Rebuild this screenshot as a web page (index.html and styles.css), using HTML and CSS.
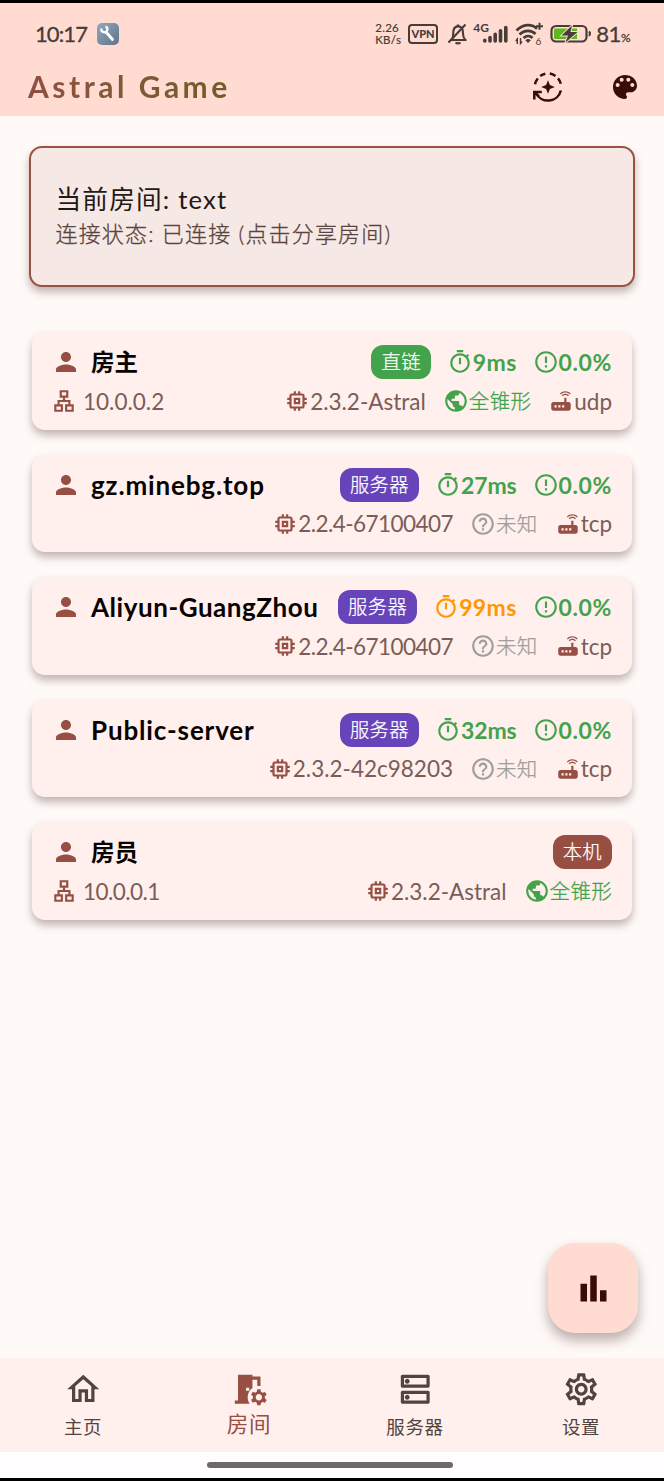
FILE: index.html
```html
<!DOCTYPE html>
<html lang="zh-CN">
<head>
<meta charset="utf-8">
<title>Astral Game</title>
<link rel="stylesheet" href="styles.css">
</head>
<body>
<svg class="defs" aria-hidden="true">
  <symbol id="person" viewBox="0 0 24 24"><path d="M12 12c2.21 0 4-1.79 4-4s-1.79-4-4-4-4 1.79-4 4 1.79 4 4 4zm0 2c-2.67 0-8 1.34-8 4v2h16v-2c0-2.66-5.33-4-8-4z"/></symbol>
  <symbol id="lan" viewBox="0 0 24 24"><path fill-rule="evenodd" d="M13 22h8v-7h-3v-4h-5V9h3V2H8v7h3v2H6v4H3v7h8v-7H8v-2h8v2h-3v7zM10 7V4h4v3h-4zM9 17v3H5v-3h4zM19 17v3h-4v-3h4z"/></symbol>
  <symbol id="chip" viewBox="0 0 24 24"><path d="M15 9H9v6h6V9zm-2 4h-2v-2h2v2zm8-2V9h-2V7c0-1.1-.9-2-2-2h-2V3h-2v2h-2V3H9v2H7c-1.1 0-2 .9-2 2v2H3v2h2v2H3v2h2v2c0 1.100.9 2 2 2h2v2h2v-2h2v2h2v-2h2c1.100 0 2-.9 2-2v-2h2v-2h-2v-2h2zm-4 6H7V7h10v10z"/></symbol>
  <symbol id="timer" viewBox="0 0 24 24"><path d="M15 1H9v2h6V1zm-4 13h2V8h-2v6zm8.030-6.610l1.420-1.420c-.43-.51-.9-.99-1.410-1.410l-1.420 1.420C16.070 4.740 14.120 4 12 4c-4.970 0-9 4.030-9 9s4.020 9 9 9 9-4.030 9-9c0-2.120-.74-4.070-1.970-5.610zM12 20c-3.870 0-7-3.130-7-7s3.130-7 7-7 7 3.130 7 7-3.130 7-7 7z"/></symbol>
  <symbol id="loss" viewBox="0 0 24 24"><path d="M11 15h2v2h-2zm0-8h2v6h-2zm.99-5C6.470 2 2 6.480 2 12s4.470 10 9.990 10C17.520 22 22 17.520 22 12S17.520 2 11.990 2zM12 20c-4.420 0-8-3.580-8-8s3.580-8 8-8 8 3.580 8 8-3.580 8-8 8z"/></symbol>
  <symbol id="globe" viewBox="0 0 24 24"><path d="M12 2C6.480 2 2 6.480 2 12s4.480 10 10 10 10-4.480 10-10S17.520 2 12 2zm-1 17.930c-3.950-.49-7-3.850-7-7.930 0-.62.08-1.210.21-1.790L9 15v1c0 1.100.9 2 2 2v1.930zm6.900-2.540c-.26-.81-1-1.390-1.900-1.390h-1v-3c0-.55-.45-1-1-1H8v-2h2c.55 0 1-.45 1-1V7h2c1.100 0 2-.9 2-2v-.41c2.930 1.190 5 4.060 5 7.410 0 2.080-.8 3.970-2.100 5.390z"/></symbol>
  <symbol id="unknown" viewBox="0 0 24 24"><path d="M11 18h2v-2h-2v2zm1-16C6.480 2 2 6.480 2 12s4.480 10 10 10 10-4.480 10-10S17.520 2 12 2zm0 18c-4.410 0-8-3.590-8-8s3.590-8 8-8 8 3.590 8 8-3.590 8-8 8zm0-14c-2.210 0-4 1.790-4 4h2c0-1.100.9-2 2-2s2 .9 2 2c0 2-3 1.750-3 5h2c0-2.250 3-2.500 3-5 0-2.210-1.790-4-4-4z"/></symbol>
  <symbol id="router" viewBox="0 0 24 24"><path d="M20.200 5.900l.8-.8C19.600 3.700 17.800 3 16 3s-3.600.7-5 2.100l.8.8C13 4.800 14.500 4.200 16 4.200s3 .6 4.200 1.700zm-.9.8c-.9-.9-2.100-1.400-3.300-1.400s-2.400.5-3.300 1.400l.8.8c.7-.7 1.600-1 2.500-1s1.800.3 2.500 1l.8-.8zM19 13h-2V9h-2v4H5c-1.100 0-2 .9-2 2v4c0 1.100.9 2 2 2h14c1.100 0 2-.9 2-2v-4c0-1.100-.9-2-2-2zM8 18H6v-2h2v2zm3.500 0h-2v-2h2v2zm3.500 0h-2v-2h2v2z"/></symbol>
</svg>

<div class="screen">
  <header class="appbar">
    <div class="status">
      <span class="clock">10:17</span>
      <svg class="wrench" viewBox="0 0 22 22"><defs><linearGradient id="wg" x1="0" y1="0" x2="1" y2="1"><stop offset="0" stop-color="#91a8bd"/><stop offset="1" stop-color="#617488"/></linearGradient></defs><rect width="22" height="22" rx="5" fill="url(#wg)"/><path d="M9 9l6.500 7.500" stroke="#fff" stroke-width="2.800" stroke-linecap="round"/><path d="M4.500 5.500a3 3 0 1 0 4-2" fill="none" stroke="#fff" stroke-width="2.200"/></svg>
      <span class="net"><span>2.26</span><span>KB/s</span></span>
      <span class="vpn">VPN</span>
      <svg class="bell" viewBox="0 0 22 22" fill="none" stroke="#473c37" stroke-width="2.100"><path d="M3 17h16.500M5 16.500c1.200-1.600 1.200-3.200 1.200-6C6.200 6 8 3.400 11 3.400s5 2.600 5 7c0 3 .6 4.500 2 6"/><path d="M8.500 19.600a3.500 2 0 0 0 5 0" /><path d="M9.800 2.500h2.500M1.500 19.500L18.500 1.500"/></svg>
      <span class="cell"><span class="fourg">4G</span><svg viewBox="0 0 36 22" stroke="#473c37" stroke-width="3.600" stroke-linecap="round"><path d="M11.800 17.200v.8M17 14.500v3.500M22.200 11.200v6.800M27.500 7.700v10.300M32.800 4.500v13.500"/></svg></span>
      <svg class="wifi" viewBox="0 0 29 24" fill="none" stroke="#473c37" stroke-width="2.700"><path d="M1.500 8.500C8 1.600 17 1.600 22 6.800M4.500 12.500C9.500 7.800 16.500 7.800 20.500 12M8.500 16c3-2.700 6.500-2.700 9 0"/><path d="M10.300 18.200a4.200 4.200 0 0 1 5.600 0L13 21z" fill="#473c37" stroke="none"/><path d="M21 4.200h7M24.500.8v7" stroke-width="2"/><path d="M2.300 22v-5l-1.500 2M5.500 16v5.500l1.500-2" stroke-width="1.400"/><text x="20.500" y="22.800" class="six">6</text></svg>
      <svg class="battery" viewBox="0 0 42 22"><rect x="1.500" y="3" width="35" height="15.500" rx="4.500" fill="none" stroke="#473c37" stroke-width="2.200"/><path d="M5 5.500h22v10.500H5q-1 0-1-1V6.500q0-1 1-1z" fill="#5eb71c"/><path d="M39 8.500q2 2 0 4.500" stroke="#473c37" stroke-width="2" fill="none"/><path d="M22 2.500L11.500 12.500H18L15.500 19.500 27.500 9H20.500z" fill="#473c37" stroke="#ffdbd2" stroke-width="1.800" paint-order="stroke"/></svg>
      <span class="pct">81<small>%</small></span>
    </div>
    <div class="titlebar">
      <h1>Astral Game</h1>
      <svg class="sync" viewBox="0 0 32 32" fill="none" stroke="#390c05" stroke-width="2.500"><path d="M3 13.200A13.300 13.300 0 0 1 5.800 7.500M8.200 5A13.300 13.300 0 0 1 13.300 2.700M17.800 2.600A13.300 13.300 0 0 1 23.500 5M26 7.400A13.300 13.300 0 0 1 28.800 12.800M28.900 19.500A13.300 13.300 0 0 1 4 22"/><path d="M2.300 28.500v-7.500h7.500M3 21.700l4 4"/><path d="M16 9.200l1.900 4.900 4.900 1.900-4.900 1.900-1.900 4.900-1.900-4.900-4.900-1.900 4.900-1.900z" fill="#390c05" stroke="none"/></svg>
      <svg class="palette" viewBox="0 0 24 24" fill="#390c05"><path d="M12 3c-4.970 0-9 4.030-9 9s4.030 9 9 9c.83 0 1.500-.67 1.500-1.500 0-.39-.15-.74-.39-1.010-.23-.26-.38-.61-.38-.99 0-.83.67-1.500 1.500-1.500H16c2.760 0 5-2.240 5-5 0-4.420-4.030-8-9-8zm-5.500 9c-.83 0-1.500-.67-1.500-1.500S5.670 9 6.500 9 8 9.670 8 10.500 7.330 12 6.500 12zm3-4C8.670 8 8 7.330 8 6.500S8.670 5 9.500 5s1.500.67 1.500 1.500S10.330 8 9.500 8zm5 0c-.83 0-1.500-.67-1.500-1.500S13.670 5 14.500 5s1.500.67 1.500 1.500S15.330 8 14.500 8zm3 4c-.83 0-1.500-.67-1.500-1.500S16.670 9 17.500 9s1.500.67 1.500 1.500-.67 1.500-1.500 1.500z"/></svg>
    </div>
  </header>

  <main>
    <section class="room">
      <div class="room-name">当前房间: <span>text</span></div>
      <div class="room-state">连接状态: 已连接 (点击分享房间)</div>
    </section>

    <section class="peers">
      <article class="peer">
        <div class="row top"><svg class="i-person"><use href="#person"/></svg><b class="name cjk">房主</b>
          <span class="badge green">直链</span>
          <span class="stat ok"><svg><use href="#timer"/></svg>9ms</span>
          <span class="stat ok rate"><svg><use href="#loss"/></svg>0.0%</span></div>
        <div class="row sub"><span class="ip"><svg><use href="#lan"/></svg>10.0.0.2</span>
          <span class="meta ver"><svg><use href="#chip"/></svg>2.3.2-Astral</span>
          <span class="meta nat"><svg><use href="#globe"/></svg>全锥形</span>
          <span class="meta proto"><svg><use href="#router"/></svg>udp</span></div>
      </article>
      <article class="peer">
        <div class="row top"><svg class="i-person"><use href="#person"/></svg><b class="name">gz.minebg.top</b>
          <span class="badge purple">服务器</span>
          <span class="stat ok tight"><svg><use href="#timer"/></svg>27ms</span>
          <span class="stat ok rate"><svg><use href="#loss"/></svg>0.0%</span></div>
        <div class="row sub"><span class="ip"></span>
          <span class="meta ver narrow"><svg><use href="#chip"/></svg>2.2.4-67100407</span>
          <span class="meta none"><svg><use href="#unknown"/></svg>未知</span>
          <span class="meta proto"><svg><use href="#router"/></svg>tcp</span></div>
      </article>
      <article class="peer">
        <div class="row top"><svg class="i-person"><use href="#person"/></svg><b class="name long">Aliyun-GuangZhou</b>
          <span class="badge purple">服务器</span>
          <span class="stat warn"><svg><use href="#timer"/></svg>99ms</span>
          <span class="stat ok rate"><svg><use href="#loss"/></svg>0.0%</span></div>
        <div class="row sub"><span class="ip"></span>
          <span class="meta ver narrow"><svg><use href="#chip"/></svg>2.2.4-67100407</span>
          <span class="meta none"><svg><use href="#unknown"/></svg>未知</span>
          <span class="meta proto"><svg><use href="#router"/></svg>tcp</span></div>
      </article>
      <article class="peer">
        <div class="row top"><svg class="i-person"><use href="#person"/></svg><b class="name">Public-server</b>
          <span class="badge purple">服务器</span>
          <span class="stat ok tight"><svg><use href="#timer"/></svg>32ms</span>
          <span class="stat ok rate"><svg><use href="#loss"/></svg>0.0%</span></div>
        <div class="row sub"><span class="ip"></span>
          <span class="meta ver"><svg><use href="#chip"/></svg>2.3.2-42c98203</span>
          <span class="meta none"><svg><use href="#unknown"/></svg>未知</span>
          <span class="meta proto"><svg><use href="#router"/></svg>tcp</span></div>
      </article>
      <article class="peer">
        <div class="row top"><svg class="i-person"><use href="#person"/></svg><b class="name cjk">房员</b>
          <span class="badge brown">本机</span></div>
        <div class="row sub"><span class="ip narrow"><svg><use href="#lan"/></svg>10.0.0.1</span>
          <span class="meta ver"><svg><use href="#chip"/></svg>2.3.2-Astral</span>
          <span class="meta nat"><svg><use href="#globe"/></svg>全锥形</span></div>
      </article>
    </section>

    <button class="fab" aria-label="统计"><svg viewBox="0 0 24 24" fill="#390c05"><path d="M4 9h4v11H4zm12 4h4v7h-4zm-6-9h4v16h-4z"/></svg></button>
  </main>

  <nav class="tabs">
    <div class="tab"><svg viewBox="0 0 24 24"><path d="M12 5.690l5 4.500V18h-2v-6H9v6H7v-7.810l5-4.500M12 3L2 12h3v8h6v-6h2v6h6v-8h3L12 3z"/></svg><span>主页</span></div>
    <div class="tab active"><svg viewBox="0 0 24 24"><path d="M14 11.260V6h3v4h2V4h-5V3H5v16H3v2h9.260c-.79-1.130-1.260-2.510-1.260-4 0-2.380 1.190-4.470 3-5.740zM10 11h2v2h-2v-2zm11.690 5.370l1.140-1-1-1.730-1.450.49c-.32-.27-.68-.48-1.080-.63L19 12h-2l-.3 1.490c-.4.15-.76.36-1.080.63l-1.450-.49-1 1.730 1.140 1c-.08.5-.08.76 0 1.260l-1.140 1 1 1.730 1.450-.49c.32.27.68.48 1.080.63L17 22h2l.3-1.490c.4-.15.76-.36 1.080-.63l1.450.49 1-1.730-1.140-1c.08-.51.08-.77 0-1.270zM18 19c-1.100 0-2-.9-2-2s.9-2 2-2 2 .9 2 2-.9 2-2 2z"/></svg><span>房间</span></div>
    <div class="tab"><svg viewBox="0 0 24 24"><path d="M19 15v4H5v-4h14m1-2H4c-.55 0-1 .45-1 1v6c0 .55.45 1 1 1h16c.55 0 1-.45 1-1v-6c0-.55-.45-1-1-1zM7 18.500c-.82 0-1.500-.67-1.500-1.500s.68-1.500 1.500-1.500 1.500.67 1.500 1.500-.67 1.500-1.500 1.500zM19 5v4H5V5h14m1-2H4c-.55 0-1 .45-1 1v6c0 .55.45 1 1 1h16c.55 0 1-.45 1-1V4c0-.55-.45-1-1-1zM7 8.500c-.82 0-1.500-.67-1.500-1.500S6.180 5.500 7 5.500s1.500.68 1.500 1.500S7.830 8.500 7 8.500z"/></svg><span>服务器</span></div>
    <div class="tab"><svg viewBox="0 0 24 24"><path d="M19.430 12.980c.04-.32.07-.64.07-.98 0-.34-.03-.66-.07-.98l2.110-1.650c.19-.15.24-.42.12-.64l-2-3.460c-.09-.16-.26-.25-.44-.25-.06 0-.12.01-.17.03l-2.490 1c-.52-.4-1.080-.73-1.690-.98l-.38-2.650C14.460 2.180 14.250 2 14 2h-4c-.25 0-.46.18-.49.42l-.38 2.650c-.61.25-1.170.59-1.690.98l-2.490-1c-.06-.02-.12-.03-.18-.03-.17 0-.34.09-.43.25l-2 3.460c-.13.22-.07.49.12.64l2.110 1.650c-.04.32-.07.65-.07.98 0 .33.03.66.07.98l-2.110 1.650c-.19.15-.24.42-.12.64l2 3.460c.09.16.26.25.44.25.06 0 .12-.01.17-.03l2.490-1c.52.4 1.080.73 1.690.98l.38 2.650c.03.24.24.42.49.42h4c.25 0 .46-.18.49-.42l.38-2.650c.61-.25 1.170-.59 1.690-.98l2.490 1c.06.02.12.03.18.03.17 0 .34-.09.43-.25l2-3.460c.12-.22.07-.49-.12-.64l-2.110-1.650zm-1.980-1.710c.04.31.05.52.05.73 0 .21-.02.43-.05.73l-.14 1.130.89.7 1.080.84-.7 1.210-1.270-.51-1.040-.42-.9.68c-.43.32-.84.56-1.250.73l-1.060.43-.16 1.130-.2 1.350h-1.400l-.19-1.350-.16-1.130-1.060-.43c-.43-.18-.83-.41-1.230-.71l-.91-.7-1.060.43-1.270.51-.7-1.210 1.080-.84.89-.7-.14-1.130c-.03-.31-.05-.54-.05-.74s.02-.43.05-.73l.14-1.130-.89-.7-1.080-.84.7-1.210 1.270.51 1.040.42.9-.68c.43-.32.84-.56 1.250-.73l1.060-.43.16-1.130.2-1.350h1.390l.19 1.350.16 1.130 1.060.43c.43.18.83.41 1.230.71l.91.7 1.060-.43 1.270-.51.7 1.210-1.070.85-.89.7.14 1.130zM12 8c-2.210 0-4 1.790-4 4s1.790 4 4 4 4-1.790 4-4-1.790-4-4-4zm0 6c-1.100 0-2-.9-2-2s.9-2 2-2 2 .9 2 2-.9 2-2 2z"/></svg><span>设置</span></div>
  </nav>
  <div class="gesture"><i></i></div>
</div>
</body>
</html>
```
FILE: styles.css
```css
* { box-sizing: border-box; margin: 0; }
body { background: #000; font-family: Lato, "Noto Sans CJK SC", sans-serif; }
.defs { position: absolute; width: 0; height: 0; }
svg { flex: none; display: block; }
.screen { width: 664px; height: 1481px; border: solid #000; border-width: 3px 0; display: flex; flex-direction: column; background: #fffaf8; }

.appbar { height: 113px; background: #ffdbd2; color: #473c37; }
.status { height: 61px; padding: 0 34px 0 35px; display: flex; align-items: center; }
.clock { font-size: 22px; width: 63px; letter-spacing: -.9px; white-space: nowrap; -webkit-text-stroke: .3px; }
.wrench { width: 22px; height: 22px; }
.net { margin-left: 256px; width: 33px; display: flex; flex-direction: column; font-size: 11.500px; line-height: 12px; letter-spacing: .3px; -webkit-text-stroke: .2px; }
.net span { height: 12px; overflow: hidden; }
.vpn { width: 31px; height: 20px; border: 2px solid #473c37; border-radius: 4px; font-size: 11px; line-height: 16px; font-weight: 900; text-align: center; }
.bell { width: 22px; height: 22px; margin-left: 9px; }
.cell { width: 36px; height: 22px; margin-left: 4px; position: relative; }
.cell svg { width: 36px; height: 22px; }
.fourg { position: absolute; left: 0; top: -1px; font-size: 12px; line-height: 12px; font-weight: 700; }
.wifi { width: 29px; height: 24px; margin-left: 6px; }
.six { font: 10px Lato, sans-serif; fill: #473c37; stroke: none; }
.battery { width: 42px; height: 22px; margin-left: 6px; }
.pct { margin-left: 4px; font-size: 22px; letter-spacing: -.5px; white-space: nowrap; -webkit-text-stroke: .3px; }
.pct small { font-size: 12px; }
.titlebar { height: 46px; padding: 0 23px 0 28px; display: flex; align-items: center; }
h1 { font-size: 30px; font-weight: 700; letter-spacing: 3.500px; line-height: 40px; margin-right: auto; background: linear-gradient(90deg, #904f42, #805a35 50%, #6f5d2b); -webkit-background-clip: text; background-clip: text; color: transparent; white-space: nowrap; margin-top: -2px; }
.sync { width: 32px; height: 32px; margin-right: 45px; }
.palette { width: 32px; height: 32px; }

main { flex: 1; min-height: 0; padding: 30px 29px 0; position: relative; }
.room { height: 141px; padding: 33px 24.500px 0; border: 2px solid #9a5145; border-radius: 13px; background: #f6e8e5; box-shadow: 0 5px 8px rgba(70,40,35,.34); }
.room-name { font-size: 25.700px; line-height: 36px; letter-spacing: 1.150px; color: #231917; white-space: nowrap; }
.room-state { font-size: 22px; line-height: 33px; letter-spacing: 1.180px; color: #59443f; white-space: nowrap; font-weight: 300; -webkit-text-stroke: .3px; }

.peers { padding: 45px 3px 0; display: flex; flex-direction: column; gap: 25px; }
.peer { height: 97.600px; padding: 10px 20px 0 19px; border-radius: 13px; background: #fff0ed; box-shadow: 0 5px 8px rgba(70,40,35,.34); }
.row { display: flex; align-items: center; white-space: nowrap; }
.top { height: 40px; gap: 16px; }
.sub { height: 38px; gap: 17px; color: #7b5c56; }
.i-person { width: 30px; height: 30px; fill: #964f42; }
.name { font-size: 26px; font-weight: 700; line-height: 32px; letter-spacing: .850px; color: #080303; margin-left: -6px; margin-right: auto; }
.long { letter-spacing: .550px; }
.cjk { font-size: 23.500px; letter-spacing: 0; }
.badge { height: 34px; border-radius: 12px; padding: 0 10px; font-size: 19.300px; letter-spacing: .4px; line-height: 34px; color: #fff; font-weight: 300; -webkit-text-stroke: .25px; }
.green { background: #43a34d; }
.purple { background: #6744ba; }
.brown { background: #964f42; }
.stat, .meta, .ip { display: flex; align-items: center; }
.stat svg, .meta svg, .ip svg { width: 26px; height: 26px; fill: currentColor; }
.stat { font-size: 23px; font-weight: 700; letter-spacing: .350px; }
.tight { letter-spacing: -.1px; }
.rate { letter-spacing: .6px; }
.ok { color: #43a34d; }
.warn { color: #fe9800; }
.ip { margin-right: auto; gap: 6px; font-size: 22.500px; }
.meta { font-size: 22.500px; }
.narrow { letter-spacing: -.550px; }
.ip svg, .ver svg, .proto svg { fill: #964f42; }
.nat { color: #43a34d; }
.none { color: #9e9e9a; }
.nat, .none { font-size: 20.500px; letter-spacing: .3px; line-height: 28px; font-weight: 300; -webkit-text-stroke: .3px; }

.fab { position: absolute; right: 26px; bottom: 25px; width: 90px; height: 90px; border: 0; border-radius: 27px; background: #ffdbd2; box-shadow: 0 7px 13px rgba(70,40,35,.38); display: grid; place-items: center; }
.fab svg { width: 39px; height: 39px; }

.tabs { height: 94px; background: #fff0ed; display: grid; grid-template-columns: repeat(4, 1fr); }
.tab { display: flex; flex-direction: column; align-items: center; padding-top: 12px; color: #534340; font-size: 18.500px; letter-spacing: .6px; }
.tab svg { width: 38.500px; height: 38.500px; fill: currentColor; }
.tab span { line-height: 26px; margin-top: 5px; }
.active { color: #964f42; font-size: 21.500px; letter-spacing: .8px; }
.active span { margin-top: 2px; }
.gesture { height: 26px; background: #fffdfd; display: flex; justify-content: center; padding: 10px 4px 0 0; }
.gesture i { width: 246px; height: 6px; border-radius: 3px; background: #6b6969; }
```
